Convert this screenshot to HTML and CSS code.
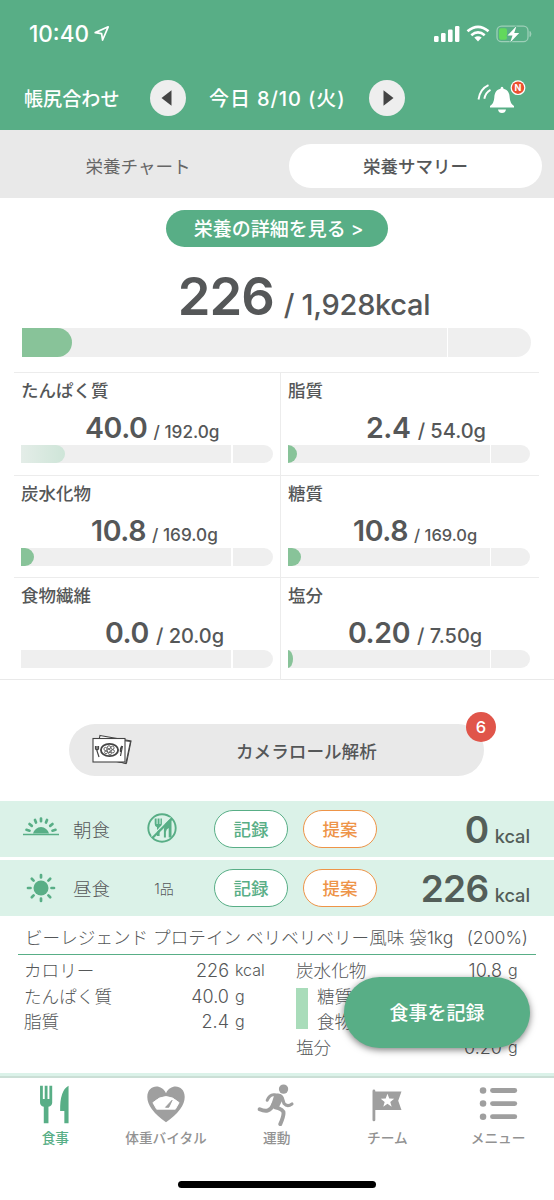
FILE: index.html
```html
<!DOCTYPE html>
<html lang="ja">
<head>
<meta charset="utf-8">
<title>栄養サマリー</title>
<link rel="stylesheet" href="styles.css">
</head>
<body>
<div class="app">
  <header class="top">
    <div class="status">
      <span class="clock">10:40</span>
      <svg class="loc" width="16" height="17" viewBox="0 0 16 17"><path d="M1.2 7.6 14.2 1.8 8.6 15 7.6 8.6Z" fill="none" stroke="#fff" stroke-width="1.7" stroke-linejoin="round"/></svg>
      <svg class="signals" width="102" height="20" viewBox="0 0 102 20">
        <g fill="#fff"><rect x="3" y="12" width="4.6" height="6" rx="1.2"/><rect x="10" y="9" width="4.6" height="9" rx="1.2"/><rect x="17" y="5.5" width="4.6" height="12.5" rx="1.2"/><rect x="24" y="2" width="4.4" height="16" rx="1.2"/></g>
        <g fill="none" stroke="#fff" stroke-width="2.7"><path d="M36.5 7.3Q47 -1.5 57.5 7.3"/><path d="M40.3 11.2Q47 5.7 53.7 11.2"/></g>
        <path d="M43.3 13.6Q47 10.7 50.7 13.6L47 17.5Z" fill="#fff"/>
        <rect x="66" y="2.2" width="31" height="15.5" rx="4.5" fill="none" stroke="#9dcfb8" stroke-width="1.3"/>
        <path d="M99 7.5q2 2.5 0 5z" fill="#9dcfb8" stroke="#9dcfb8"/>
        <rect x="68" y="4.2" width="8" height="11.5" rx="2" fill="#62d85c"/>
        <path d="M85.5 2 76.5 11.4h5l-2.3 7.2 9-9.7h-5z" fill="#fff" stroke="#58ae86" stroke-width="1.5" paint-order="stroke"/>
      </svg>
    </div>
    <nav class="datebar">
      <span class="adjust">帳尻合わせ</span>
      <span class="round"><svg width="36" height="36" viewBox="0 0 36 36"><path d="M11.5 18 21.5 10.2v15.6z" fill="#444"/></svg></span>
      <span class="today">今日 8/10 (火)</span>
      <span class="round"><svg width="36" height="36" viewBox="0 0 36 36"><path d="M24.5 18 14.5 10.2v15.6z" fill="#444"/></svg></span>
      <svg class="bell" width="50" height="38" viewBox="0 0 50 38">
        <path d="M13 28.5v-1.6q4-2.3 4.3-8.4c.2-5 2.4-8 6.200-8.800q.2-2 1.500-2t1.500 2c3.800.8 6 3.800 6.200 8.800q.3 6.100 4.300 8.400v1.600zM21 30.500h8q-.6 3.500-4 3.500t-4-3.500z" fill="#fff"/>
        <path d="M1.500 20.500Q3 10 11.500 6.200M7.300 19.800Q8.500 13.500 13.500 10.800" fill="none" stroke="#fff" stroke-width="1.900"/>
        <circle cx="41" cy="8.700" r="7.400" fill="#fff"/><circle cx="41" cy="8.700" r="6.200" fill="#eb5030"/>
        <text x="41" y="12" class="new">N</text>
      </svg>
    </nav>
  </header>

  <div class="switch"><span>栄養チャート</span><span class="on">栄養サマリー</span></div>

  <main>
    <section class="summary">
      <div class="detail">栄養の詳細を見る &gt;</div>
      <p class="total"><b>226</b><span>/ 1,928kcal</span></p>
      <div class="bar big"><i style="width:50px"></i></div>
    </section>

    <section class="grid">
      <div class="cell"><h3>たんぱく質</h3><p><b>40.0</b><em>/ 192.0g</em></p><div class="bar"><i class="pale" style="width:44px"></i></div></div>
      <div class="cell wide"><h3>脂質</h3><p><b>2.4</b><em class="lg">/ 54.0g</em></p><div class="bar"><i class="tip" style="width:9px"></i></div></div>
      <div class="cell"><h3>炭水化物</h3><p><b>10.8</b><em>/ 169.0g</em></p><div class="bar"><i style="width:13px"></i></div></div>
      <div class="cell narrow"><h3>糖質</h3><p><b>10.8</b><em class="sm">/ 169.0g</em></p><div class="bar"><i style="width:13px"></i></div></div>
      <div class="cell fiber"><h3>食物繊維</h3><p><b>0.0</b><em class="lg">/ 20.0g</em></p><div class="bar"></div></div>
      <div class="cell salt"><h3>塩分</h3><p><b>0.20</b><em class="lg">/ 7.50g</em></p><div class="bar"><i class="tip" style="width:5px"></i></div></div>
    </section>

    <section class="camera">
      <svg width="40" height="32" viewBox="0 0 40 32">
        <g stroke="#444" stroke-width="1.1" fill="#fff"><path d="M8 1.5 39 7 34.5 29 3 24z"/><path d="M31 6.5 38.500 7.500 33.800 29.500 24 27z"/><rect x="1" y="4.500" width="32" height="23.500"/></g>
        <ellipse cx="17.500" cy="16" rx="9.500" ry="7" fill="#444"/><ellipse cx="17.500" cy="16" rx="7.700" ry="5.200" fill="#fff"/>
        <g fill="none" stroke="#444" stroke-width=".8"><circle cx="13.500" cy="15" r="1.600"/><circle cx="17" cy="13.300" r="1.600"/><circle cx="20.500" cy="13.800" r="1.600"/><circle cx="16.800" cy="16.800" r="1.600"/><circle cx="20.800" cy="17.300" r="1.600"/><circle cx="14" cy="18.400" r="1.400"/><circle cx="18" cy="19.500" r="1.400"/></g>
        <path d="M3.500 12v3q1.500 2 3 0v-3M5 12v5l2 6M30.500 12l-2 10M30 12q-2 2-1.500 6" stroke="#444" stroke-width="1.200" fill="none"/>
      </svg>
      <span>カメラロール解析</span>
      <b class="count">6</b>
    </section>

    <section class="meal">
      <svg class="sun" width="36" height="32" viewBox="0 0 36 32"><path d="M10 20.500a8.200 8.200 0 0 1 16 0z" fill="#58ae86"/><path d="M0 21.500H36" stroke="#58ae86" stroke-width="1.400"/><path d="M3.500 16.800l3 .9M6.500 11l2.300 1.900M12 7l1 2.500M18 5.500v2.700M24 7l-1 2.500M29.500 11l-2.300 1.900M32.500 16.800l-3 .9" stroke="#58ae86" stroke-width="2.700" stroke-linecap="round"/></svg>
      <span class="name">朝食</span>
      <span class="items"><svg width="30" height="30" viewBox="0 0 30 30"><circle cx="15" cy="15" r="13.700" fill="none" stroke="#58ae86" stroke-width="1.900"/><path d="M7.700 5.500v5.500q0 2.600 2.300 3.300V23h2.600v-8.700q2.300-.7 2.300-3.300V5.500h-1.400v5.500h-1V5.500h-1.900v5.500h-1V5.500zM24.500 5v19.500h-2.800V15q-2.500 1-2.800 4v5.500h-2V17q0-9 7.600-12z" fill="#58ae86"/><path d="M4.500 23.500 23.500 4.500" stroke="#dbf2e8" stroke-width="1.300"/><path d="M5.600 24.800 24.800 5.600" stroke="#58ae86" stroke-width="2.300"/></svg></span>
      <span class="btn">記録</span><span class="btn orange">提案</span>
      <p><b>0</b><small>kcal</small></p>
    </section>
    <section class="meal">
      <svg class="sun" width="36" height="32" viewBox="0 0 36 32"><circle cx="18" cy="16" r="7.500" fill="#58ae86"/><path d="M18 3v2.500M18 26.500V29M5 16h2.500M28.500 16H31M8.800 6.800l1.800 1.800M25.400 23.400l1.800 1.800M8.800 25.200l1.800-1.800M25.400 8.600l1.800-1.800" stroke="#58ae86" stroke-width="2.700" stroke-linecap="round"/></svg>
      <span class="name">昼食</span>
      <span class="items">1品</span>
      <span class="btn">記録</span><span class="btn orange">提案</span>
      <p><b>226</b><small>kcal</small></p>
    </section>

    <section class="food">
      <h4><span>ビーレジェンド プロテイン ベリベリベリー風味 袋1kg</span><span class="pct">(200%)</span></h4>
      <div class="facts">
        <dl>
          <div><dt>カロリー</dt><dd>226</dd><dd class="unit">kcal</dd></div>
          <div><dt>たんぱく質</dt><dd>40.0</dd><dd class="unit">g</dd></div>
          <div><dt>脂質</dt><dd>2.4</dd><dd class="unit">g</dd></div>
        </dl>
        <dl class="right">
          <div><dt>炭水化物</dt><dd>10.8</dd><dd class="unit">g</dd></div>
          <div class="sub"><dt>糖質</dt></div>
          <div class="sub end"><dt>食物繊維</dt></div>
          <div><dt>塩分</dt><dd>0.20</dd><dd class="unit">g</dd></div>
        </dl>
      </div>
    </section>
  </main>
  <div class="fab">食事を記録</div>

  <footer>
    <nav class="tabs">
      <div class="tab active"><svg width="44" height="43" viewBox="0 0 44 46"><path d="M6 3h3v14h2V3h3v14h2V3h3v18q0 3-4 4.500V43h-5V25.500q-4-1.500-4-4.500zM36.500 3v40H32V30h-4.500q-.5-22 9-27z" fill="#58ae86"/></svg><span>食事</span></div>
      <div class="tab"><svg width="44" height="43" viewBox="0 0 44 46"><path d="M22 42Q2 28 2 15C2 2 17 0 22 11 27 0 42 2 42 15Q42 28 22 42Z" fill="#9f9f9f"/><path d="M8 21q14-13 28 0l-4 7H12z" fill="#fff" stroke="#fff" stroke-linejoin="round"/><path d="M28.500 18.500 25 26h-3.500z" fill="#9f9f9f" stroke="#9f9f9f"/></svg><span>体重バイタル</span></div>
      <div class="tab"><svg width="44" height="43" viewBox="0 0 44 46"><circle cx="29" cy="6.500" r="5" fill="#9f9f9f"/><path d="M11.500 18.500Q14 12 19 12.500l5 1" stroke="#9f9f9f" stroke-width="3.200" fill="none" stroke-linecap="round"/><path d="M23 13q4 .5 5 4l1.500 5q3.500 4 8.500.5" stroke="#9f9f9f" stroke-width="3.400" fill="none" stroke-linecap="round"/><path d="M19.500 11.500Q28 11 29 16L23.500 27 15.500 24z" fill="#9f9f9f"/><path d="M18 23Q14 33 3.500 28M20 26q9 2 9 6t-3.500 12" stroke="#9f9f9f" stroke-width="4.200" fill="none" stroke-linecap="round" stroke-linejoin="round"/></svg><span>運動</span></div>
      <div class="tab"><svg width="44" height="43" viewBox="0 0 44 46"><path d="M8 8.500v31" stroke="#9f9f9f" stroke-width="3" stroke-linecap="round"/><path d="M8 9h29.500l-3.500 10 3.500 10H8z" fill="#9f9f9f"/><path d="M22.500 11.500 24.400 16.700 29.700 16.900 25.500 20.200 27 25.400 22.500 22.300 18 25.400 19.500 20.200 15.300 16.900 20.600 16.700Z" fill="#fff"/></svg><span>チーム</span></div>
      <div class="tab"><svg width="44" height="43" viewBox="0 0 44 46"><g fill="#9f9f9f"><circle cx="6" cy="8" r="3.500"/><circle cx="6" cy="22" r="3.500"/><circle cx="6" cy="36" r="3.500"/><rect x="13.500" y="5.400" width="29" height="5.200" rx="2.600"/><rect x="13.500" y="19.400" width="29" height="5.200" rx="2.600"/><rect x="13.500" y="33.400" width="29" height="5.200" rx="2.600"/></g></svg><span>メニュー</span></div>
    </nav>
    <div class="home"></div>
  </footer>
</div>
</body>
</html>
```

FILE: styles.css
```css
* { box-sizing: border-box; margin: 0; padding: 0; }
body {
  width: 554px; height: 1200px; overflow: hidden; background: #fff; color: #555758;
  font-family: Inter, "Noto Sans CJK JP", sans-serif;
}
b, em, i, small { font-style: normal; }
.app { position: relative; height: 1200px; display: flex; flex-direction: column; }

.top { height: 130px; background: #58ae86; color: #fff; }
.status { height: 65px; padding: 24px 21px 0 29px; display: flex; align-items: flex-start; }
.clock { font-size: 22.5px; line-height: 20px; font-weight: 500; width: 65px; }
.loc { margin-top: 1px; }
.signals { margin-left: auto; }
.datebar { height: 65px; display: flex; align-items: center; padding: 0 27px 0 24px; }
.adjust { width: 126px; font-size: 19.1px; font-weight: 500; }
.round { width: 36px; height: 36px; border-radius: 50%; background: #eee; }
.round svg { display: block; }
.today { width: 183px; padding-left: 23px; font-size: 20px; font-weight: 500; white-space: nowrap; letter-spacing: .9px; }
.bell { margin-left: auto; }
.new { font: 700 9px Inter, sans-serif; fill: #fff; text-anchor: middle; }

.switch { height: 68px; background: #e9e9e9; display: flex; align-items: center; font-size: 17.5px; line-height: 44px; }
.switch span { flex: none; width: 276px; height: 44px; padding-top: 3px; text-align: center; color: #666; }
.switch .on { width: 253px; margin: 2px 0 0 13px; position: relative; top: 1px; border-radius: 22px; background: #fff; color: #555758; font-weight: 500; padding-top: 1px; }

.summary { height: 174px; padding: 12px 22px 0; }
.detail { width: 222px; height: 37px; margin: 0 auto; border-radius: 19px; background: #58ae86; color: #fff; text-align: center; font-size: 19px; font-weight: 500; line-height: 39px; padding-left: 3px; }
.total { height: 81px; display: flex; align-items: baseline; justify-content: center; line-height: 90px; white-space: nowrap; padding-left: 54px; }
.total b { font-size: 52.5px; font-weight: 600; line-height: 98px; letter-spacing: -1px; }
.total span { font-size: 29px; font-weight: 500; margin-left: 10px; letter-spacing: -.3px; }
.bar { height: 18px; border-radius: 0 9px 9px 0; background: linear-gradient(90deg, #efefef 83.4%, #fff 83.4%, #fff calc(83.4% + 1.5px), #efefef calc(83.4% + 1.5px)); overflow: hidden; }
.bar i { display: block; height: 100%; background: #88c399; border-radius: 0 9px 9px 0; }
.bar .tip { border-radius: 0 100% 100% 0 / 0 50% 50% 0; }
.bar .pale { background: linear-gradient(90deg, #e4ede8, #cee5d8); }
.bar.big { height: 29px; width: 509px; border-radius: 0 15px 15px 0; }
.bar.big i { border-radius: 0 15px 15px 0; }

.grid { height: 308px; display: grid; grid-template-columns: 267px 258px; grid-template-rows: repeat(3, 102.5px); padding-left: 14px; border-bottom: 1px solid #e9e9e9; }
.cell { border-top: 1.5px solid #ececec; padding: 7px 7px 0 7px; }
.cell:nth-child(odd) { border-right: 1px solid #ececec; }
.cell:nth-child(even) { padding-left: 7px; padding-right: 9px; }
.cell h3 { font-size: 17.5px; line-height: 22px; font-weight: 500; }
.cell p { height: 43px; display: flex; align-items: baseline; line-height: 51px; white-space: nowrap; padding-left: 64px; }
.cell p b { font-size: 28.5px; font-weight: 600; letter-spacing: -.4px; }
.cell em { font-size: 17.2px; font-weight: 500; margin-left: 6px; }
.cell em.lg { font-size: 20px; margin-left: 7px; }
.cell em.sm { font-size: 16.5px; }
.cell.wide p { padding-left: 78px; }
.cell:nth-child(3) p { padding-left: 70px; }
.cell.narrow p { padding-left: 65px; }
.cell.fiber p { padding-left: 84px; }
.cell.salt p { padding-left: 60px; }

.camera { position: relative; width: 415px; height: 52px; margin: 44px 0 25px 69px; border-radius: 26px; background: #e9e9e9; display: flex; align-items: center; padding-left: 23px; font-size: 17.6px; font-weight: 500; }
.camera > span { margin-left: 104px; }
.count { position: absolute; right: -12px; top: -12px; width: 30px; height: 30px; border-radius: 50%; background: #e0554a; color: #fff; text-align: center; line-height: 30px; font-size: 16.5px; font-weight: 500; }

.meal { height: 56px; margin-bottom: 3px; background: #dbf2e8; display: flex; align-items: center; padding: 0 24px 0 23px; }
.name { width: 66px; margin-left: 14px; font-size: 18.5px; font-weight: 300; }
.items { width: 50px; font-size: 14px; font-weight: 300; text-align: center; }
.items svg { display: block; margin: 0 0 2px 8px; }
.btn { width: 74px; height: 38px; margin-left: 25px; border: 1.5px solid #58ae86; border-radius: 19px; background: #fff; color: #58ae86; text-align: center; line-height: 38px; font-size: 17.5px; font-weight: 500; }
.orange { margin-left: 15px; border-color: #ee9448; color: #ee9448; }
.meal p { margin-left: auto; display: flex; align-items: baseline; white-space: nowrap; color: #535e59; }
.meal p b { font-size: 37px; font-weight: 600; letter-spacing: -.6px; line-height: 43px; }
.meal small { font-size: 18.2px; font-weight: 500; margin-left: 6px; }

.food { padding: 0 18px; height: 154px; font-weight: 300; }
.food h4 { height: 36px; padding: 0 8px 0 7px; display: flex; justify-content: space-between; font-size: 17.6px; line-height: 37px; font-weight: 300; border-bottom: 1.5px solid #58ae86; white-space: nowrap; }
.facts { display: flex; padding: 3px 0 0 6px; font-size: 17.6px; line-height: 25.5px; }
.facts dl { width: 272px; }
.facts dl > div { display: flex; height: 25.5px; }
.facts dt { width: 110px; }
.facts dd { width: 95px; text-align: right; font-size: 18px; }
.facts dd.unit { width: auto; font-size: 16px; margin-left: 6px; }
.facts .right { width: 225px; }
.right dd { width: 96px; }
.right .sub { background: linear-gradient(#a9dcba, #a9dcba) no-repeat 0 4px / 12px 100%; }
.right .sub.end { background-position: 0 0; background-size: 12px 20px; }
.right .sub dt { padding-left: 21px; white-space: nowrap; }

.fab { position: absolute; left: 344px; top: 977px; width: 186px; height: 71px; border-radius: 36px; background: #58ae86; color: #fff; text-align: center; font-size: 19px; font-weight: 500; line-height: 73px; box-shadow: 0 2px 7px rgba(0,0,0,.5); }

footer { margin-top: auto; height: 127px; border-top: 3px solid #dbf2e9; background: #fff; display: flex; flex-direction: column; }
.tabs { height: 105px; border-top: 2px solid #cbdfd6; display: grid; grid-template-columns: repeat(5, 110.7px); }
.tab { display: flex; flex-direction: column; align-items: center; padding-top: 5px; color: #929292; font-size: 13.7px; font-weight: 500; line-height: 24px; }
.tab svg { flex: none; }
.tab.active { color: #58ae86; }
.home { width: 198px; height: 7px; margin: 0 auto; border-radius: 4px; background: #000; }
```
